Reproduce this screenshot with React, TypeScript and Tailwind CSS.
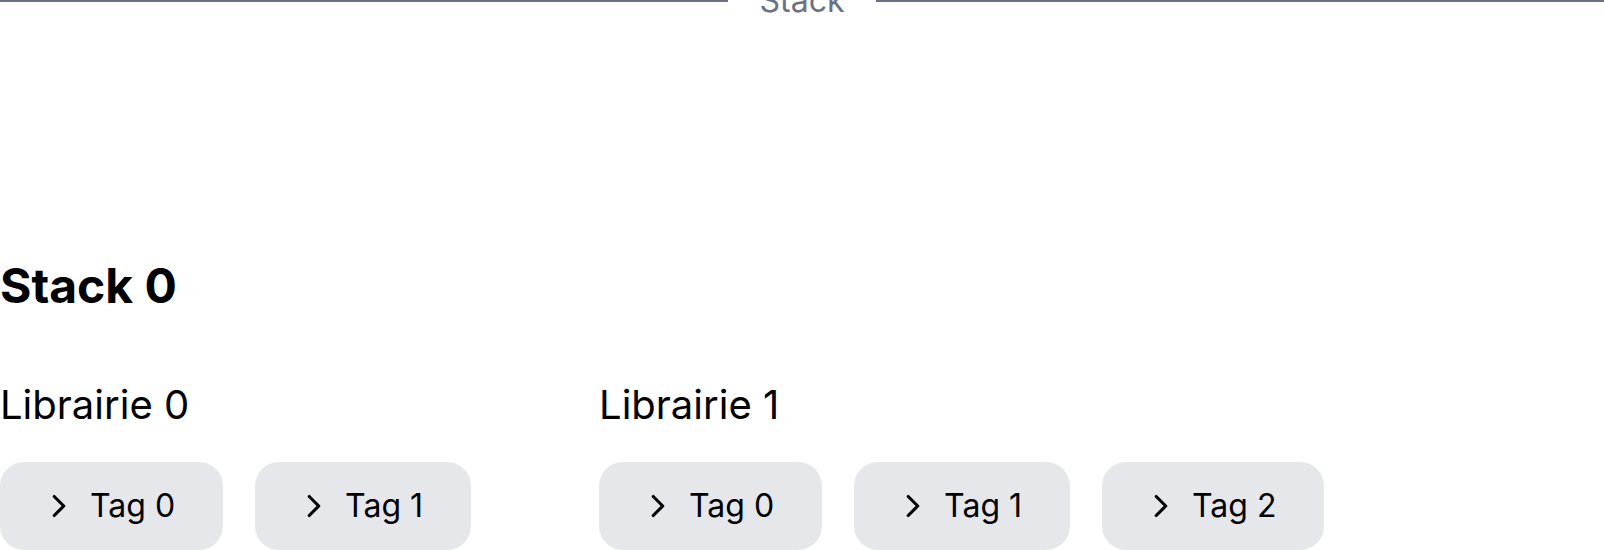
import { ChevronRight } from "lucide-react";

const libraries = [
  { name: "Librairie 0", tags: ["Tag 0", "Tag 1"] },
  { name: "Librairie 1", tags: ["Tag 0", "Tag 1", "Tag 2"] },
];

function TagButton({ label }: { label: string }) {
  return (
    <button className="flex items-center gap-3 pl-10 pr-12 py-[25px] bg-gray-200 rounded-3xl text-[32px] leading-9 text-black">
      <ChevronRight size={38} strokeWidth={2} />
      <span>{label}</span>
    </button>
  );
}

export default function App() {
  return (
    <div
      className="h-[550px] w-full overflow-hidden bg-white"
      style={{ fontFamily: "Inter, 'Noto Sans', sans-serif" }}
    >
      {/* Divider */}
      <div className="flex items-center -mt-[19px]">
        <div className="flex-1 h-[2px] bg-gray-500" />
        <span className="px-8 text-[32px] leading-10 text-gray-500">Stack</span>
        <div className="flex-1 h-[2px] bg-gray-500" />
      </div>

      <h2 className="mt-[241px] text-5xl font-bold text-black">Stack 0</h2>

      <div className="mt-[75px] flex gap-32">
        {libraries.map((lib) => (
          <div key={lib.name}>
            <h3 className="text-[40px] leading-10 text-black">{lib.name}</h3>
            <div className="mt-[37px] flex gap-8">
              {lib.tags.map((tag) => (
                <TagButton key={tag} label={tag} />
              ))}
            </div>
          </div>
        ))}
      </div>
    </div>
  );
}
